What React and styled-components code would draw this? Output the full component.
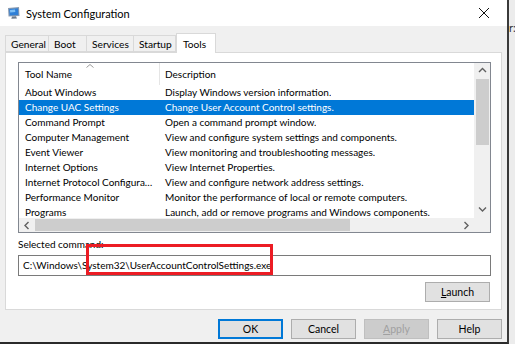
import React from 'react';
import styled, { createGlobalStyle } from 'styled-components';

const GlobalStyle = createGlobalStyle`
  html, body {
    margin: 0;
    padding: 0;
    background: #e9e9e9;
  }
  body {
    font-family: Lato, "Noto Sans", sans-serif;
    font-size: 10px;
    color: #000;
  }
`;

const tools = [
  ['About Windows', 'Display Windows version information.'],
  ['Change UAC Settings', 'Change User Account Control settings.'],
  ['Command Prompt', 'Open a command prompt window.'],
  ['Computer Management', 'View and configure system settings and components.'],
  ['Event Viewer', 'View monitoring and troubleshooting messages.'],
  ['Internet Options', 'View Internet Properties.'],
  ['Internet Protocol Configuration', 'View and configure network address settings.'],
  ['Performance Monitor', 'Monitor the performance of local or remote computers.'],
  ['Programs', 'Launch, add or remove programs and Windows components.'],
];

const tabs = ['General', 'Boot', 'Services', 'Startup', 'Tools'];
const tabWidths = [44, 38, 47, 42, 40];

export default function App() {
  return (
    <>
      <GlobalStyle />
      <Screen>
        <Window>
          <TitleBar>
            <AppIcon />
            <Title>System Configuration</Title>
            <CloseButton>
              <svg width="12" height="12" viewBox="0 0 12 12">
                <path d="M1 1 L11 11 M11 1 L1 11" stroke="#111" strokeWidth="1" />
              </svg>
            </CloseButton>
          </TitleBar>
          <Body>
            <TabStrip>
              {tabs.map((t, i) => (
                <Tab key={t} $active={t === 'Tools'} $w={tabWidths[i]}>{t}</Tab>
              ))}
            </TabStrip>
            <Panel>
              <ListView>
                <ListContent>
                  <HeaderRow>
                    <HeadCell $w={141}>
                      Tool Name
                      <SortArrow viewBox="0 0 8 4" width="8" height="4">
                        <path d="M0.5 3.5 L4 0.5 L7.5 3.5" fill="none" stroke="#9a9a9a" strokeWidth="1" />
                      </SortArrow>
                    </HeadCell>
                    <HeadCell>Description</HeadCell>
                  </HeaderRow>
                  {tools.map(([name, desc]) => (
                    <Row key={name} $selected={name === 'Change UAC Settings'}>
                      <NameCell>{name}</NameCell>
                      <DescCell>{desc}</DescCell>
                    </Row>
                  ))}
                </ListContent>
                <VScroll>
                  <ArrowBox>
                    <Chevron dir="up" />
                  </ArrowBox>
                  <VThumb />
                  <Spacer />
                  <ArrowBox>
                    <Chevron dir="down" />
                  </ArrowBox>
                </VScroll>
                <HScroll>
                  <HArrowBox>
                    <Chevron dir="left" />
                  </HArrowBox>
                  <HThumb />
                  <Spacer />
                  <HArrowBox>
                    <Chevron dir="right" />
                  </HArrowBox>
                </HScroll>
                <Corner />
              </ListView>
              <Label>Selected command:</Label>
              <TextBox>C:\Windows\System32\UserAccountControlSettings.exe</TextBox>
              <LaunchRow>
                <Button><u>L</u>aunch</Button>
              </LaunchRow>
            </Panel>
            <Footer>
              <Button $primary>OK</Button>
              <Button>Cancel</Button>
              <Button disabled><u>A</u>pply</Button>
              <Button>Help</Button>
            </Footer>
          </Body>
        </Window>
        <Side>r:</Side>
        <Highlight />
      </Screen>
    </>
  );
}

function AppIcon() {
  return (
    <IconSvg width="14" height="14" viewBox="0 0 14 14">
      <path d="M1 2 L12 1 L12.5 10 L1.5 10.5 Z" fill="#8a9bb0" />
      <path d="M2.2 3 L11.1 2.2 L11.4 9 L2.6 9.4 Z" fill="#2f7fd6" />
      <path d="M3 4 L8 3.5 L8.3 6 L3.2 6.4 Z" fill="#7fc0f5" />
      <path d="M5 10.5 L9 10.3 L10 12.5 L4.3 12.8 Z" fill="#6d7b8c" />
    </IconSvg>
  );
}

function Chevron({ dir }) {
  const paths = {
    up: 'M1 5 L4.5 1.5 L8 5',
    down: 'M1 1.5 L4.5 5 L8 1.5',
    left: 'M5.5 1 L2 4.5 L5.5 8',
    right: 'M2.5 1 L6 4.5 L2.5 8',
  };
  return (
    <svg width="9" height="9" viewBox="0 0 9 9">
      <path d={paths[dir]} fill="none" stroke="#606060" strokeWidth="1.4" />
    </svg>
  );
}

const Screen = styled.div`
  position: relative;
  display: flex;
  width: 515px;
  height: 344px;
  overflow: hidden;
`;

const Window = styled.div`
  width: 507px;
  height: 342px;
  display: flex;
  flex-direction: column;
  border-right: 2px solid #3a3a3a;
  border-bottom: 2px solid #2a2a2a;
  background: #f0f0f0;
`;

const TitleBar = styled.div`
  height: 26px;
  background: #fff;
  display: flex;
  align-items: center;
  padding-left: 7px;
`;

const IconSvg = styled.svg`
  flex: none;
  margin-right: 5px;
`;

const Title = styled.div`
  flex: 1;
  font-size: 11px;
  color: #000;
`;

const CloseButton = styled.div`
  width: 46px;
  height: 26px;
  display: flex;
  align-items: center;
  justify-content: center;
`;

const Body = styled.div`
  flex: 1;
  display: flex;
  flex-direction: column;
  padding: 6px 5px 0 5px;
`;

const TabStrip = styled.div`
  display: flex;
  align-items: flex-end;
  height: 20px;
  position: relative;
  z-index: 1;
`;

const Tab = styled.div`
  box-sizing: border-box;
  width: ${p => p.$w}px;
  height: ${p => (p.$active ? 20 : 17)}px;
  margin-bottom: ${p => (p.$active ? -1 : 0)}px;
  padding-left: ${p => (p.$active ? 6 : 5)}px;
  display: flex;
  align-items: center;
  background: ${p => (p.$active ? '#fff' : '#f0f0f0')};
  border: 1px solid #d9d9d9;
  border-bottom: ${p => (p.$active ? 'none' : '1px solid #d9d9d9')};
  border-left: ${p => (p.$active ? '1px solid #d9d9d9' : 'none')};
  &:first-child {
    border-left: 1px solid #d9d9d9;
  }
  font-size: 10.2px;
  white-space: nowrap;
`;

const Panel = styled.div`
  box-sizing: border-box;
  height: 258px;
  background: #fff;
  border: 1px solid #d9d9d9;
  padding: 9px 10px 0 12px;
  display: flex;
  flex-direction: column;
`;

const ListView = styled.div`
  box-sizing: border-box;
  height: 171px;
  border: 1px solid #828790;
  display: grid;
  grid-template-columns: 1fr 16px;
  grid-template-rows: 1fr 14px;
  overflow: hidden;
`;

const ListContent = styled.div`
  overflow: hidden;
  min-width: 0;
`;

const HeaderRow = styled.div`
  display: flex;
  height: 22px;
  align-items: center;
`;

const HeadCell = styled.div`
  position: relative;
  box-sizing: border-box;
  ${p => (p.$w ? `width: ${p.$w}px; border-right: 1px solid #e5e5e5;` : 'flex: 1;')}
  height: 22px;
  line-height: 22px;
  padding-left: ${p => (p.$w ? 6 : 5)}px;
  white-space: nowrap;
`;

const SortArrow = styled.svg`
  position: absolute;
  top: 1px;
  left: 67px;
`;

const Row = styled.div`
  display: flex;
  height: 15px;
  line-height: 15px;
  white-space: nowrap;
  background: ${p => (p.$selected ? '#0078d7' : 'transparent')};
  color: ${p => (p.$selected ? '#fff' : '#000')};
`;

const NameCell = styled.div`
  box-sizing: border-box;
  width: 141px;
  flex: none;
  padding-left: 6px;
  padding-right: 3px;
  overflow: hidden;
  text-overflow: ellipsis;
`;

const DescCell = styled.div`
  padding-left: 5px;
  overflow: hidden;
`;

const VScroll = styled.div`
  grid-row: 1;
  grid-column: 2;
  background: #f0f0f0;
  display: flex;
  flex-direction: column;
  align-items: center;
`;

const ArrowBox = styled.div`
  height: 16px;
  width: 16px;
  display: flex;
  align-items: center;
  justify-content: center;
`;

const HArrowBox = styled.div`
  width: 16px;
  height: 14px;
  display: flex;
  align-items: center;
  justify-content: center;
`;

const VThumb = styled.div`
  width: 13px;
  height: 66px;
  background: #cdcdcd;
`;

const Spacer = styled.div`
  flex: 1;
`;

const HScroll = styled.div`
  grid-row: 2;
  grid-column: 1;
  background: #f0f0f0;
  display: flex;
  align-items: center;
`;

const HThumb = styled.div`
  width: 315px;
  height: 12px;
  background: #cdcdcd;
`;

const Corner = styled.div`
  grid-row: 2;
  grid-column: 2;
  background: #f0f0f0;
`;

const Label = styled.div`
  margin-top: 3px;
  height: 16px;
  line-height: 16px;
`;

const TextBox = styled.div`
  box-sizing: border-box;
  height: 21px;
  margin-top: 3px;
  border: 1px solid #7a7a7a;
  padding-left: 4px;
  line-height: 19px;
  white-space: nowrap;
  overflow: hidden;
`;

const LaunchRow = styled.div`
  display: flex;
  justify-content: flex-end;
  margin-top: 6px;
  padding-right: 1px;
`;

const Button = styled.button`
  box-sizing: border-box;
  width: 65px;
  height: 20px;
  padding: 0;
  font-family: inherit;
  font-size: 10.5px;
  color: ${p => (p.disabled ? '#a0a0a0' : '#000')};
  background: ${p => (p.disabled ? '#cccccc' : '#e1e1e1')};
  border: 1px solid ${p => (p.$primary ? '#0078d7' : p.disabled ? '#bfbfbf' : '#adadad')};
  box-shadow: ${p => (p.$primary ? 'inset 0 0 0 1px #0078d7' : 'none')};
  u {
    text-decoration: underline;
    text-underline-offset: 1px;
  }
`;

const Footer = styled.div`
  display: flex;
  justify-content: flex-end;
  gap: 8px;
  margin-top: 9px;
`;

const Side = styled.div`
  flex: 1;
  background: #ececec;
  padding-top: 21px;
  font-size: 11px;
  color: #333;
  white-space: nowrap;
  overflow: hidden;
`;

const Highlight = styled.div`
  position: absolute;
  left: 86px;
  top: 244px;
  width: 187px;
  height: 31px;
  box-sizing: border-box;
  border: 3px solid #ec1c24;
  pointer-events: none;
`;
